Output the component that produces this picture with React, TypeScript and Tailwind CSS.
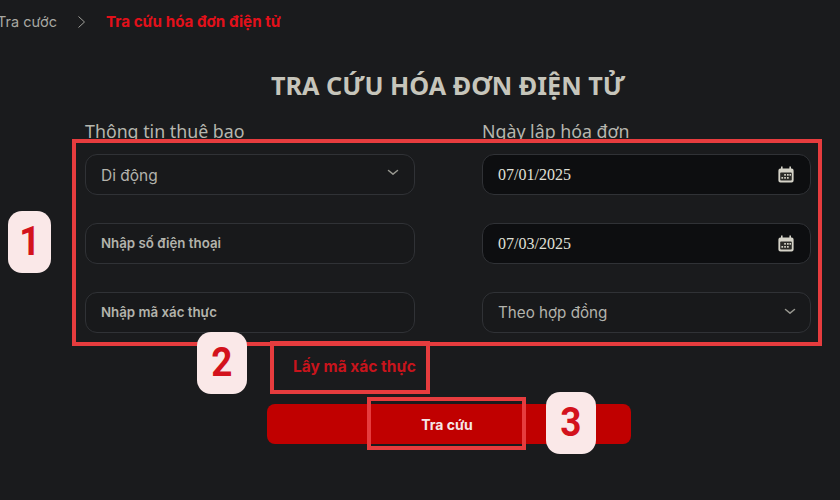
const ff = "font-['Inter','Noto_Sans',sans-serif]";

function Chevron() {
  return (
    <svg width="12" height="7" viewBox="0 0 12 7" fill="none" stroke="#96968f" strokeWidth="1.5" strokeLinecap="round" strokeLinejoin="round">
      <path d="M1.5 1.5 L6 5.2 L10.5 1.5" />
    </svg>
  );
}

function CalendarIcon() {
  return (
    <svg width="16" height="17" viewBox="0 0 16 17" className="shrink-0">
      <path fill="#d5d3c8" d="M3 0.5h1.6v2h6.8v-2H13v2h0.6A2 2 0 0 1 15.6 4.5v10a2 2 0 0 1-2 2H2.4a2 2 0 0 1-2-2v-10a2 2 0 0 1 2-2H3z" />
      <rect x="2.2" y="6.6" width="11.6" height="8" rx="0.8" fill="#2b2b28" />
      <g fill="#d5d3c8">
        <rect x="6.2" y="8" width="1.7" height="1.7" />
        <rect x="9" y="8" width="1.7" height="1.7" />
        <rect x="11.5" y="8" width="1.5" height="1.7" />
        <rect x="3.4" y="11" width="1.7" height="1.7" />
        <rect x="6.2" y="11" width="1.7" height="1.7" />
        <rect x="9" y="11" width="1.7" height="1.7" />
      </g>
    </svg>
  );
}

function Field({ children, dark }: { children: React.ReactNode; dark?: boolean }) {
  return (
    <div className={`flex h-[41px] items-center justify-between rounded-xl border border-[#303236] pl-[15px] pr-[16px] ${dark ? "bg-[#0d0e10]" : "bg-[#18191b]"}`}>
      {children}
    </div>
  );
}

function Badge({ n, className }: { n: string; className: string }) {
  return (
    <div className={`absolute flex items-center justify-center rounded-[14px] bg-[#fae8e8] font-['Roboto',sans-serif] text-[41px] font-bold text-[#d3121c] ${className}`}>
      <span className="inline-block scale-x-90">{n}</span>
    </div>
  );
}

function Box({ className }: { className: string }) {
  return <div className={`pointer-events-none absolute border-[4px] border-[#e63c3e] ${className}`} />;
}

export default function App() {
  return (
    <div className={`relative h-[500px] w-[840px] overflow-hidden bg-[#1a1b1d] ${ff}`}>
      <nav className="flex h-[44px] items-center text-[14.5px]">
        <span className="-ml-[3px] w-[59px] whitespace-nowrap text-[#a8a8a2]">Tra cước</span>
        <svg className="ml-[21px]" width="9" height="14" viewBox="0 0 9 14" fill="none" stroke="#a0a09a" strokeWidth="1">
          <path d="M1.5 1.5 L7.5 7 L1.5 12.5" />
        </svg>
        <span className="ml-[20px] whitespace-nowrap text-[15.2px] font-bold text-[#e3101a]">Tra cứu hóa đơn điện tử</span>
      </nav>

      <main className="ml-[85px] w-[726px]">
        <h1 className="mt-[21px] h-[40px] text-center font-['Noto_Sans',sans-serif] text-[25.2px] font-bold leading-[40px] text-[#c6c5bb]">
          TRA CỨU HÓA ĐƠN ĐIỆN TỬ
        </h1>

        <div className="mt-[14px] grid grid-cols-[330px_329px] gap-x-[67px]">
          <div className="flex flex-col">
            <div className="h-[25px] font-['Noto_Sans',sans-serif] text-[17.8px] leading-[25px] text-[#b6b6ae]">Thông tin thuê bao</div>
            <div className="mt-[10px] flex flex-col gap-[28px]">
              <Field>
                <span className="mt-[3px] text-[15.5px] text-[#b3b3ac]">Di động</span>
                <span className="-mr-[1px] -mt-[4px]"><Chevron /></span>
              </Field>
              <Field>
                <span className="text-[13.3px] font-semibold text-[#b3b3ac]">Nhập số điện thoại</span>
              </Field>
              <Field>
                <span className="text-[13.3px] font-semibold text-[#b3b3ac]">Nhập mã xác thực</span>
              </Field>
            </div>
          </div>
          <div className="flex flex-col">
            <div className="h-[25px] font-['Noto_Sans',sans-serif] text-[17.8px] leading-[25px] text-[#b6b6ae]">Ngày lập hóa đơn</div>
            <div className="mt-[10px] flex flex-col gap-[28px]">
              <Field dark>
                <span className="font-['Liberation_Serif',serif] text-[16px] text-[#e0e0d8]">07/01/2025</span>
                <CalendarIcon />
              </Field>
              <Field dark>
                <span className="font-['Liberation_Serif',serif] text-[16px] text-[#e0e0d8]">07/03/2025</span>
                <CalendarIcon />
              </Field>
              <Field>
                <span className="mt-[2px] text-[15.2px] text-[#b3b3ac]">Theo hợp đồng</span>
                <span className="-mr-[2px] -mt-[3px]"><Chevron /></span>
              </Field>
            </div>
          </div>
        </div>

        <div className="ml-[208px] mt-[23px] h-[22px] text-[15.5px] font-bold leading-[22px] text-[#c8141c]">Lấy mã xác thực</div>

        <button className="ml-[182px] mt-[26px] flex h-[40px] w-[364px] items-center justify-center rounded-lg bg-[#c00000] text-[14px] font-bold text-[#f5e6e6]">
          <span className="-ml-[4px]">Tra cứu</span>
        </button>
      </main>

      <Box className="left-[72px] top-[139px] h-[207px] w-[750px]" />
      <Box className="left-[270px] top-[341px] h-[53px] w-[160px]" />
      <Box className="left-[367px] top-[397px] h-[53px] w-[159px]" />
      <Badge n="1" className="left-[8px] top-[211px] h-[62px] w-[43px]" />
      <Badge n="2" className="left-[197px] top-[332px] h-[62px] w-[50px]" />
      <Badge n="3" className="left-[546px] top-[392px] h-[62px] w-[50px]" />
    </div>
  );
}
